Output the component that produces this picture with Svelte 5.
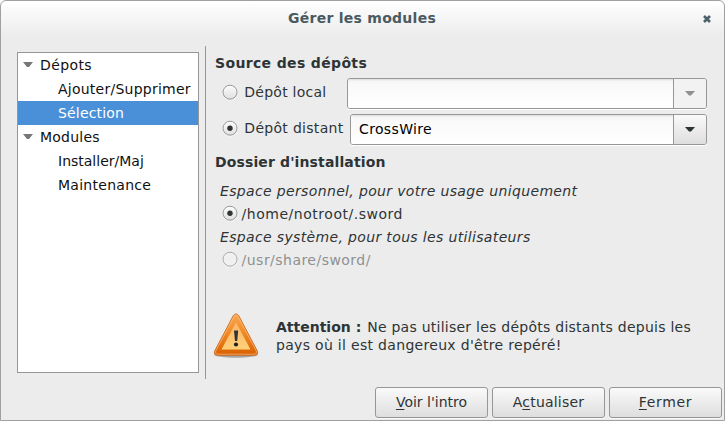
<script>
  const tree = [
    { label: 'Dépots', parent: true, w: 'dep' },
    { label: 'Ajouter/Supprimer', w: 'ajo' },
    { label: 'Sélection', selected: true, w: 'sel' },
    { label: 'Modules', parent: true, w: 'mod' },
    { label: 'Installer/Maj', w: 'ins' },
    { label: 'Maintenance', w: 'mai' }
  ];
</script>

{#snippet radio(on, disabled)}
  <svg class="radio" width="16" height="17" viewBox="0 0 16 17">
    <circle cx="8" cy="8.9" r="7.2" fill="none" stroke="#fff" opacity=".7" />
    <circle cx="8" cy="8.2" r="7" fill={disabled ? '#f0f0f0' : 'url(#radioFill)'} stroke={disabled ? '#aaa' : '#979797'} />
    {#if on}<circle cx="8" cy="8.2" r="2.7" fill="#2e3436" />{/if}
  </svg>
{/snippet}

<div class="window">
  <svg width="0" height="0" class="defs">
    <defs>
      <linearGradient id="radioFill" x2="0" y2="1">
        <stop offset="0" stop-color="#fdfdfd" /><stop offset="1" stop-color="#dfdfdf" />
      </linearGradient>
    </defs>
  </svg>
  <header>
    <h1>Gérer les modules</h1>
    <svg class="close" width="8" height="8" viewBox="0 0 8 8">
      <path d="M1 1 7 7M7 1 1 7" stroke="#4b6068" stroke-width="2.6" />
    </svg>
  </header>

  <main>
    <nav>
      {#each tree as item}
        <div class="row" class:selected={item.selected} class:parent={item.parent}>
          {#if item.parent}
            <svg width="10" height="6" viewBox="0 0 10 6"><path d="M0 0H10L6 5H4Z" fill="#747779" /></svg>
          {/if}
          <span class={item.w}>{item.label}</span>
        </div>
      {/each}
    </nav>
    <section>
      <h2 class="src">Source des dépôts</h2>
      <div class="choice local">
        {@render radio(false, false)}<span class="loc">Dépôt local</span>
        <div class="combo off"><div class="field"></div><div class="drop">
          <svg width="10" height="5" viewBox="0 0 10 5"><path d="M0 0H10L6 4.6H4Z" fill="#8e9192" /></svg></div></div>
      </div>
      <div class="choice remote">
        {@render radio(true, false)}<span class="dis">Dépôt distant</span>
        <div class="combo"><div class="field"><span class="cro">CrossWire</span></div><div class="drop">
          <svg width="10" height="5" viewBox="0 0 10 5"><path d="M0 0H10L6 4.6H4Z" fill="#2e3436" /></svg></div></div>
      </div>
      <h2 class="dos">Dossier d'installation</h2>
      <p class="note per">Espace personnel, pour votre usage uniquement</p>
      <div class="path">{@render radio(true, false)}<span class="hom">/home/notroot/.sword</span></div>
      <p class="note sys">Espace système, pour tous les utilisateurs</p>
      <div class="path disabled">{@render radio(false, true)}<span class="usr">/usr/share/sword/</span></div>
      <div class="warning">
        <svg width="48" height="48" viewBox="0 0 48 48">
          <defs>
            <linearGradient id="outer" x2="0" y2="1"><stop offset="0" stop-color="#f7a752" /><stop offset=".45" stop-color="#f18a25" /><stop offset="1" stop-color="#d95f00" /></linearGradient>
            <linearGradient id="inner" x2="0" y2="1"><stop offset="0" stop-color="#fbb66e" /><stop offset="1" stop-color="#ffd078" /></linearGradient>
            <radialGradient id="shade"><stop offset=".7" stop-color="#000" stop-opacity=".3" /><stop offset="1" stop-color="#000" stop-opacity="0" /></radialGradient>
          </defs>
          <ellipse cx="24" cy="43.2" rx="23.5" ry="3" fill="url(#shade)" />
          <path d="M21.3 3.6Q24 .2 26.7 3.6L45.4 39.2Q46.4 43.2 43 43.2H5Q1.6 43.2 2.6 39.2Z" fill="url(#outer)" stroke="#c8691f" stroke-width=".9" />
          <path d="M22.2 4.2Q24 1.700 25.8 4.2L44.4 39.2Q45 42.2 42.6 42.2H5.4Q3 42.2 3.6 39.2Z" fill="none" stroke="#ffc58a" stroke-opacity=".65" />
          <path d="M24 10.5 38.5 37.5H9.5Z" fill="url(#inner)" />
          <path d="M22 18.5H26.2L25.2 29H23Z" fill="#2e3436" />
          <circle cx="24" cy="32.5" r="2.1" fill="#222" />
        </svg>
        <p><span class="l1"><b>Attention :</b> <span class="ne">Ne pas utiliser les dépôts distants depuis les</span></span><span class="l2">pays où il est dangereux d'être repéré!</span></p>
      </div>
    </section>
  </main>

  <footer>
    <button><span class="voi"><u>V</u>oir l'intro</span></button>
    <button><span class="act">A<u>c</u>tualiser</span></button>
    <button><span class="fer"><u>F</u>ermer</span></button>
  </footer>
</div>

<style>
  :global(body) { background: #fff; }
  .window {
    box-sizing: border-box; width: 725px; height: 421px; overflow: hidden;
    border: 1px solid #a0a0a0; border-radius: 6px 6px 0 0;
    background: linear-gradient(#fff, #ececec 35px, #ececec);
    font: 14px/18px "DejaVu Sans", sans-serif; color: #2e3436; white-space: nowrap;
    display: flex; flex-direction: column;
  }
  .defs { position: absolute; }
  h1, h2, p { margin: 0; font-size: 14px; line-height: 18px; }
  header { height: 45px; flex: none; display: flex; align-items: flex-start; }
  h1 { flex: 1; text-align: center; padding: 8px 0 0 20px; color: #4a5a60; letter-spacing: .27px; }
  .close { margin: 14px 13px 0 0; width: 8px; }
  main { display: flex; height: 333px; flex: none; padding-left: 16px; }
  nav { box-sizing: border-box; width: 182px; height: 321px; margin: 6px 6px 0 0; border: 1px solid #979797; background: #fff; color: #111; }
  .row { height: 24px; display: flex; align-items: center; padding-left: 40px; }
  .row.parent { padding-left: 5px; gap: 7px; }
  .selected { background: #4a90d9; color: #fff; }
  section { box-sizing: border-box; height: 333px; flex: 1; border-left: 1px solid #979797; padding-left: 9px; }
  .src { margin-top: 8px; letter-spacing: .35px; }
  .choice { display: flex; align-items: center; height: 31px; }
  .choice > span { margin: -3px 0 0 6px; flex: 1; }
  .local { margin: 6px 0 5px; padding-left: 7.3px; }
  .remote { padding-left: 7.3px; }
  .choice > :global(.radio) { margin-top: -2px; }
  .radio { flex: none; }
  .combo { box-sizing: border-box; width: 360px; height: 31px; margin-right: 17px; display: flex; border: 1px solid #979797; border-radius: 3px; box-shadow: 0 1px #fff; overflow: hidden; }
  .remote .combo { width: 357px; }
  .field { flex: 1; display: flex; align-items: center; padding-left: 8px; color: #000; background: linear-gradient(#ddd, #f5f5f5 2px, #f9f9f9 5px, #fff); }
  .drop { width: 32px; border-left: 1px solid #979797; display: flex; align-items: center; justify-content: center; background: linear-gradient(#fafafa, #dedede); }
  .off .drop { background: #f2f2f2; }
  .dos { margin-top: 8px; letter-spacing: .13px; }
  .note { font-style: italic; margin: 11px 0 4px 5px; }
  .path { height: 19px; display: flex; align-items: center; gap: 4px; padding-left: 6.6px; }
  .path + .note { margin-top: 5px; }
  .disabled { color: #8e9192; }
  .warning { display: flex; margin-top: 43px; gap: 16px; margin-left: -3px; }
  .warning p { margin-top: 6px; }
  .l1, .l2 { display: block; }
  footer { display: flex; gap: 4px; justify-content: flex-end; padding: 8px 2px 0 0; }
  button { width: 113px; height: 31px; padding: 0 0 2px; border: 1px solid #979797; border-radius: 3px; background: linear-gradient(#fafafa, #dedede); font: inherit; color: inherit; box-shadow: 0 1px #f8f8f8; }
  u { text-decoration-thickness: 1px; text-underline-offset: 2px; }

  .dep { letter-spacing: .4px; }
  .ajo { letter-spacing: .24px; }
  .sel { letter-spacing: .17px; }
  .mod { letter-spacing: .22px; }
  .mai { letter-spacing: .27px; }
  .loc { letter-spacing: .25px; }
  .dis { letter-spacing: .3px; }
  .cro { margin-top: -2px; letter-spacing: .35px; }
  .per { letter-spacing: .35px; }
  .sys { letter-spacing: .35px; }
  .hom { letter-spacing: .52px; }
  .usr { letter-spacing: .47px; }
  .ne { margin-left: 1.5px; letter-spacing: .25px; }
  .l2 { letter-spacing: .31px; }
  .act { letter-spacing: .2px; }
  .fer { letter-spacing: .65px; }
</style>
